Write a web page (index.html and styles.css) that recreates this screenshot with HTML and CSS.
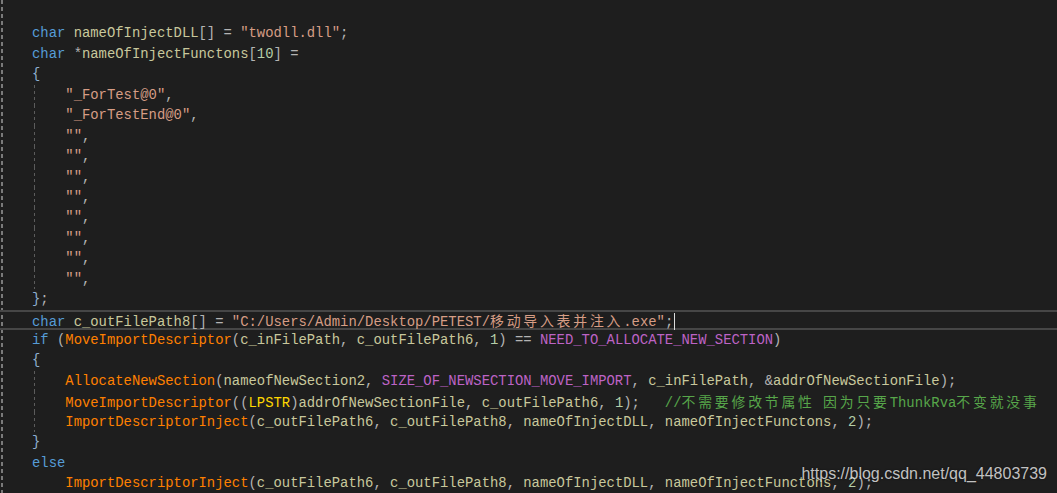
FILE: index.html
```html
<!DOCTYPE html>
<html lang="zh">
<head>
  <meta charset="UTF-8">
  <meta name="viewport" content="width=device-width, initial-scale=1.0">
  <title>PETEST - 导入表注入</title>
  <link rel="stylesheet" href="styles.css">
</head>
<body>
  <div class="editor">
    <!-- 代码区 -->
    <div class="code">
      <div class="line"> </div>
      <div class="line"><span class="kw">char</span> <span class="id">nameOfInjectDLL</span><span class="pun">[] = </span><span class="str">"twodll.dll"</span><span class="pun">;</span></div>
      <div class="line"><span class="kw">char</span> <span class="pun">*</span><span class="id">nameOfInjectFunctons</span><span class="pun">[</span><span class="num">10</span><span class="pun">] =</span></div>
      <div class="line"><span class="br">{</span></div>
      <div class="line g">    <span class="str">"_ForTest@0"</span><span class="pun">,</span></div>
      <div class="line g">    <span class="str">"_ForTestEnd@0"</span><span class="pun">,</span></div>
      <div class="line g">    <span class="str">""</span><span class="pun">,</span></div>
      <div class="line g">    <span class="str">""</span><span class="pun">,</span></div>
      <div class="line g">    <span class="str">""</span><span class="pun">,</span></div>
      <div class="line g">    <span class="str">""</span><span class="pun">,</span></div>
      <div class="line g">    <span class="str">""</span><span class="pun">,</span></div>
      <div class="line g">    <span class="str">""</span><span class="pun">,</span></div>
      <div class="line g">    <span class="str">""</span><span class="pun">,</span></div>
      <div class="line g">    <span class="str">""</span><span class="pun">,</span></div>
      <div class="line"><span class="br">}</span><span class="pun">;</span></div>
      <div class="line current"><span class="kw">char</span> <span class="id">c_outFilePath8</span><span class="pun">[] = </span><span class="str">"C:/Users/Admin/Desktop/PETEST/<span class="cjk">移动导入表并注入</span>.exe"</span><span class="pun">;</span><span class="caret"></span></div>
      <div class="line"><span class="kw">if</span> <span class="pun">(</span><span class="fn">MoveImportDescriptor</span><span class="pun">(</span><span class="id">c_inFilePath</span><span class="pun">, </span><span class="id">c_outFilePath6</span><span class="pun">, </span><span class="num">1</span><span class="pun">) == </span><span class="mac">NEED_TO_ALLOCATE_NEW_SECTION</span><span class="pun">)</span></div>
      <div class="line"><span class="br">{</span></div>
      <div class="line g">    <span class="fn">AllocateNewSection</span><span class="pun">(</span><span class="id">nameofNewSection2</span><span class="pun">, </span><span class="mac">SIZE_OF_NEWSECTION_MOVE_IMPORT</span><span class="pun">, </span><span class="id">c_inFilePath</span><span class="pun">, &amp;</span><span class="id">addrOfNewSectionFile</span><span class="pun">);</span></div>
      <div class="line g">    <span class="fn">MoveImportDescriptor</span><span class="pun">((</span><span class="ty">LPSTR</span><span class="pun">)</span><span class="id">addrOfNewSectionFile</span><span class="pun">, </span><span class="id">c_outFilePath6</span><span class="pun">, </span><span class="num">1</span><span class="pun">);</span>   <span class="cm">//<span class="cjk">不需要修改节属性</span> <span class="cjk">因为只要</span>ThunkRva<span class="cjk">不变就没事</span></span></div>
      <div class="line g">    <span class="fn">ImportDescriptorInject</span><span class="pun">(</span><span class="id">c_outFilePath6</span><span class="pun">, </span><span class="id">c_outFilePath8</span><span class="pun">, </span><span class="id">nameOfInjectDLL</span><span class="pun">, </span><span class="id">nameOfInjectFunctons</span><span class="pun">, </span><span class="num">2</span><span class="pun">);</span></div>
      <div class="line"><span class="br">}</span></div>
      <div class="line"><span class="kw">else</span></div>
      <div class="line">    <span class="fn">ImportDescriptorInject</span><span class="pun">(</span><span class="id">c_outFilePath6</span><span class="pun">, </span><span class="id">c_outFilePath8</span><span class="pun">, </span><span class="id">nameOfInjectDLL</span><span class="pun">, </span><span class="id">nameOfInjectFunctons</span><span class="pun">, </span><span class="num">2</span><span class="pun">);</span></div>
    </div>
    <!-- 水印 -->
    <div class="watermark">https://blog.csdn.net/qq_44803739</div>
  </div>
</body>
</html>
```

FILE: styles.css
```css
html, body {
  margin: 0;
  padding: 0;
  background: #1e1e1e;
}
.editor {
  position: relative;
  width: 1057px;
  height: 493px;
  overflow: hidden;
  background-color: #1e1e1e;
  /* 左侧虚线 */
  background-image: repeating-linear-gradient(to bottom, #7a7a7a 0 4px, transparent 4px 7px);
  background-size: 2px 100%;
  background-repeat: no-repeat;
  background-position: 1px 0;
}
.code {
  padding-top: 3px;
  font-family: "Liberation Mono", "Noto Sans CJK SC", monospace;
  font-size: 13.88px;
  color: #b4b4b4;
}
.line {
  height: 20.45px;
  line-height: 20.45px;
  padding-left: 32px;
  white-space: pre;
}
/* 缩进参考线 */
.line.g {
  background-image: repeating-linear-gradient(to bottom, #5c5c5c 0 3px, transparent 3px 6px);
  background-size: 1px 100%;
  background-repeat: no-repeat;
  background-position: 34px 0;
}
/* 当前行 */
.line.current {
  box-shadow: inset 0 2px #464646, inset 0 -2px #464646;
}
.caret {
  display: inline-block;
  width: 0;
  height: 17px;
  vertical-align: middle;
  border-left: 1px solid #dcdcdc;
  margin-left: 1px;
}
.kw { color: #569cd6; }
.id { color: #c8c89c; }
.str { color: #d69d85; }
.fn { color: #ff8000; }
.mac { color: #bd63c5; }
.ty { color: #ffd700; }
.num { color: #b5cea8; }
.pun { color: #b4b4b4; }
.br { color: #8fb0d0; }
.cm { color: #57a64a; }
.cjk {
  font-family: "Noto Sans CJK SC", sans-serif;
  letter-spacing: 2.78px;
}
.watermark {
  position: absolute;
  right: 10px;
  bottom: 9px;
  font-family: "Liberation Sans", Arial, sans-serif;
  font-size: 16px;
  line-height: 20px;
  color: rgba(235, 235, 235, 0.82);
  text-shadow: 0 0 2px rgba(0, 0, 0, 0.6);
}
```
